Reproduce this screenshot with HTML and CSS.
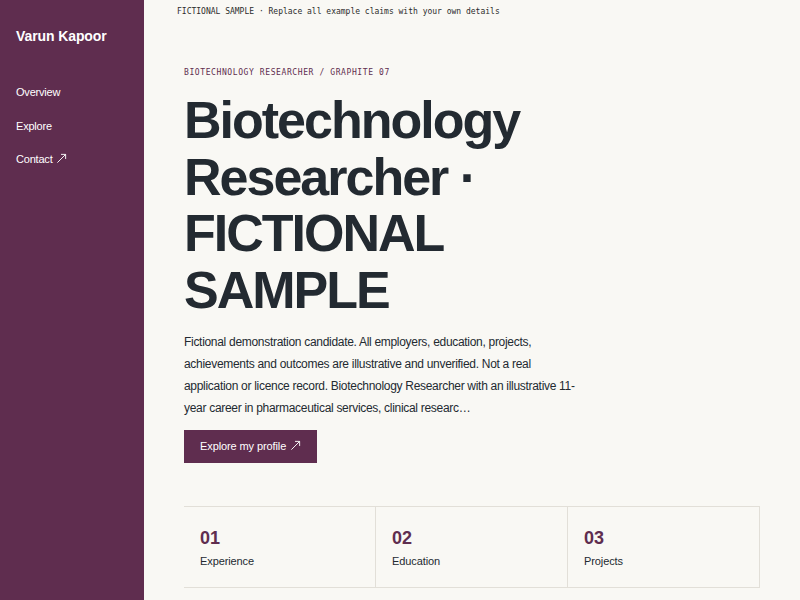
FILE: index.html
```html
<!DOCTYPE html>
<html>
<head>
<meta charset="utf-8">
<link rel="stylesheet" href="styles.css">
</head>
<body>
<div class="layout">
  <aside class="sidebar">
    <div class="brand">Varun Kapoor</div>
    <nav class="nav">
      <a href="#">Overview</a>
      <a href="#">Explore</a>
      <a href="#">Contact <svg class="arrow" viewBox="0 0 12 12" width="11" height="11"><path d="M1.5 10.5 L10.5 1.5 M5.5 1.5 H10.5 V6.5" fill="none" stroke="currentColor" stroke-width="1"/></svg></a>
    </nav>
  </aside>
  <main class="main">
    <div class="banner">FICTIONAL SAMPLE · Replace all example claims with your own details</div>
    <section class="hero">
      <div class="eyebrow">BIOTECHNOLOGY RESEARCHER / GRAPHITE 07</div>
      <h1 class="title">Biotechnology Researcher · FICTIONAL SAMPLE</h1>
      <p class="lead">Fictional demonstration candidate. All employers, education, projects, achievements and outcomes are illustrative and unverified. Not a real application or licence record. Biotechnology Researcher with an illustrative 11-year career in pharmaceutical services, clinical researc…</p>
      <a class="cta" href="#">Explore my profile <svg class="arrow" viewBox="0 0 12 12" width="11" height="11"><path d="M1.5 10.5 L10.5 1.5 M5.5 1.5 H10.5 V6.5" fill="none" stroke="currentColor" stroke-width="1"/></svg></a>
    </section>
    <section class="cards">
      <div class="card"><div class="num">01</div><div class="label">Experience</div></div>
      <div class="card"><div class="num">02</div><div class="label">Education</div></div>
      <div class="card"><div class="num">03</div><div class="label">Projects</div></div>
    </section>
  </main>
</div>
</body>
</html>
```
FILE: styles.css
```css
* { box-sizing: border-box; }
html, body { margin: 0; padding: 0; height: 100%; }
body {
  font-family: "Liberation Sans", Arial, sans-serif;
  background: #f9f8f4;
  color: #232a31;
  overflow: hidden;
}
.layout { display: flex; min-height: 600px; }
.sidebar {
  width: 144px;
  flex: none;
  background: #5f2d4f;
  color: #fff;
  padding: 27px 16px;
}
.brand { font-weight: bold; font-size: 14px; line-height: 18px; letter-spacing: -0.1px; }
.nav { display: flex; flex-direction: column; gap: 17.5px; margin-top: 39px; }
.nav a { color: #fff; text-decoration: none; font-size: 11px; line-height: 16px; letter-spacing: -0.2px; }
.arrow { vertical-align: -1px; margin-left: 1px; }
.main { flex: 1; padding: 0 40px; }
.banner {
  font-family: "DejaVu Sans Mono", monospace;
  font-size: 8px;
  color: #2c2c2c;
  padding-top: 7px;
  margin-left: -7px;
  line-height: 10px;
}
.hero { padding-top: 51px; }
.eyebrow {
  font-family: "DejaVu Sans Mono", monospace;
  font-size: 8px;
  letter-spacing: 0.6px;
  color: #5f2d4f;
  line-height: 10px;
}
.title {
  font-size: 52px;
  line-height: 56.5px;
  letter-spacing: -2px;
  font-weight: bold;
  margin: 14px 0 0;
  max-width: 380px;
  color: #232a31;
}
.lead {
  font-size: 12px;
  line-height: 22px;
  letter-spacing: -0.3px;
  max-width: 400px;
  margin: 13px 0 0;
  color: #232a31;
}
.cta {
  display: inline-block;
  margin-top: 11px;
  background: #5f2d4f;
  color: #fff;
  text-decoration: none;
  font-size: 11px;
  line-height: 33px;
  letter-spacing: -0.1px;
  padding: 0 16px;
}
.cards {
  display: grid;
  grid-template-columns: repeat(3, 1fr);
  margin-top: 43px;
  border-top: 1px solid #e2dfd8;
  border-bottom: 1px solid #e2dfd8;
}
.card {
  border-right: 1px solid #e2dfd8;
  padding: 20px 16px 18px;
  height: 80px;
}
.num { font-size: 18px; font-weight: bold; color: #5f2d4f; line-height: 22px; }
.label { font-size: 11px; line-height: 14px; margin-top: 5px; color: #232a31; letter-spacing: -0.1px; }
```
